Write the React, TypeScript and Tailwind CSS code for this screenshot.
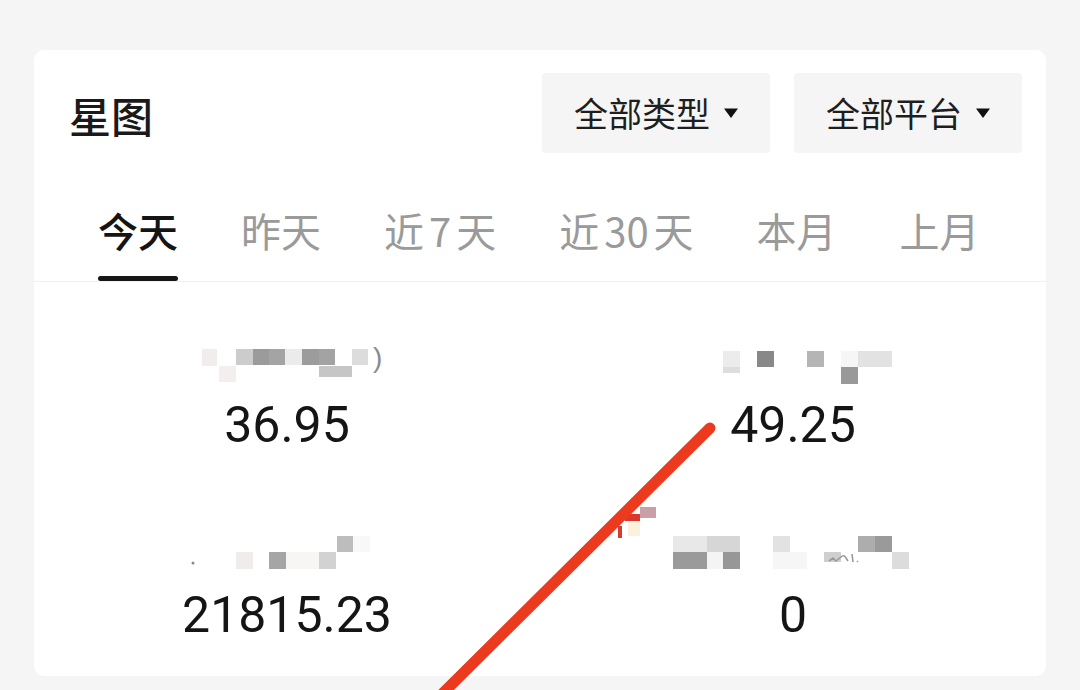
type Cell = { x: number; y: number; w: number; h: number; c: string };

// 数字前后留一点空隙，和汉字分开
const tabs: [string, string, string][] = [
  ["今天", "", ""],
  ["昨天", "", ""],
  ["近", "7", "天"],
  ["近", "30", "天"],
  ["本月", "", ""],
  ["上月", "", ""],
];

// 打码后的指标名称，用色块拼出来
const masks: Cell[][] = [
  [
    { x: 65, y: 10, w: 15, h: 17, c: "#f2eded" },
    { x: 82, y: 27, w: 17, h: 16, c: "#f4eeee" },
    { x: 99, y: 10, w: 17, h: 16, c: "#cccccc" },
    { x: 116, y: 10, w: 16, h: 16, c: "#9b9b9b" },
    { x: 132, y: 10, w: 16, h: 16, c: "#a4a4a4" },
    { x: 148, y: 10, w: 17, h: 16, c: "#ebebeb" },
    { x: 165, y: 10, w: 17, h: 16, c: "#9c9c9c" },
    { x: 182, y: 10, w: 16, h: 16, c: "#a3a3a3" },
    { x: 182, y: 27, w: 33, h: 11, c: "#c6c6c6" },
    { x: 215, y: 10, w: 16, h: 16, c: "#dcdcdc" },
  ],
  [
    { x: 80, y: 12, w: 17, h: 16, c: "#ececec" },
    { x: 80, y: 28, w: 17, h: 6, c: "#dddddd" },
    { x: 114, y: 12, w: 17, h: 16, c: "#888888" },
    { x: 164, y: 12, w: 17, h: 16, c: "#b5b5b5" },
    { x: 198, y: 12, w: 17, h: 16, c: "#f6f6f6" },
    { x: 215, y: 12, w: 34, h: 16, c: "#e2e2e2" },
    { x: 198, y: 28, w: 17, h: 17, c: "#999999" },
  ],
  [
    { x: 200, y: 7, w: 17, h: 16, c: "#bdbdbd" },
    { x: 216, y: 7, w: 17, h: 16, c: "#f8f8f8" },
    { x: 99, y: 23, w: 17, h: 17, c: "#f0ecec" },
    { x: 132, y: 23, w: 17, h: 17, c: "#a5a5a5" },
    { x: 149, y: 23, w: 33, h: 17, c: "#f8f5f5" },
    { x: 182, y: 23, w: 17, h: 17, c: "#d2d2d2" },
  ],
  [
    { x: -18, y: -15, w: 15, h: 7, c: "#d9382a" },
    { x: -3, y: -22, w: 16, h: 11, c: "#c9a0a6" },
    { x: -15, y: -8, w: 12, h: 15, c: "#fbf1dc" },
    { x: -25, y: -3, w: 4, h: 12, c: "#d83a30" },
    { x: 30, y: 7, w: 34, h: 16, c: "#e8e8e8" },
    { x: 64, y: 7, w: 33, h: 16, c: "#d6d6d6" },
    { x: 130, y: 7, w: 17, h: 16, c: "#e2e2e2" },
    { x: 215, y: 7, w: 17, h: 16, c: "#adadad" },
    { x: 232, y: 7, w: 17, h: 16, c: "#9a9a9a" },
    { x: 30, y: 23, w: 34, h: 17, c: "#9a9a9a" },
    { x: 64, y: 23, w: 16, h: 17, c: "#f4f4f4" },
    { x: 80, y: 23, w: 17, h: 17, c: "#979797" },
    { x: 130, y: 23, w: 34, h: 17, c: "#f6f6f6" },
    { x: 181, y: 23, w: 17, h: 10, c: "#cfcfcf" },
    { x: 249, y: 23, w: 17, h: 17, c: "#dcdcdc" },
  ],
];

const stats = ["36.95", "49.25", "21815.23", "0"];

function Mosaic({ cells, idx }: { cells: Cell[]; idx: number }) {
  return (
    <svg width="300" height="48" viewBox="0 0 300 48" className="overflow-visible">
      {cells.map((r, i) => (
        <rect key={i} x={r.x} y={r.y} width={r.w} height={r.h} fill={r.c} />
      ))}
      {idx === 0 && (
        <text x="236" y="28" fontSize="28" fill="#8a8a8a" fontFamily="Liberation Sans, sans-serif">
          )
        </text>
      )}
      {idx === 2 && <circle cx="56" cy="34" r="1.5" fill="#888" />}
      {idx === 3 && (
        <path d="M186 32 l4 -3 l3 3 l5 -4 q3 -3 5 1 l2 3 M209 25 l1 8 M214 32 l1 1" stroke="#999" strokeWidth="1.6" fill="none" />
      )}
    </svg>
  );
}

function Caret() {
  return (
    <svg width="14" height="10" viewBox="0 0 14 10" className="shrink-0">
      <path d="M0 0.5 H14 L7 10 Z" fill="#111" />
    </svg>
  );
}

export default function App() {
  return (
    <div className="relative w-[1080px] h-[690px] overflow-hidden bg-[#f5f5f5] px-[34px] pt-[50px] font-['Noto_Sans_CJK_SC',sans-serif]">
      <div className="h-[626px] rounded-[10px] bg-white">
        {/* 标题 + 筛选 */}
        <div className="flex items-start justify-between pl-[35px] pr-[24px] pt-[23px]">
          <div className="mt-[21px] text-[42px] leading-none font-medium text-[#1a1a1a]">星图</div>
          <div className="flex gap-[24px]">
            {["全部类型", "全部平台"].map((t) => (
              <div
                key={t}
                className="flex h-[80px] w-[228px] items-center justify-center gap-[14px] rounded-[4px] bg-[#f6f5f5] text-[34px] text-[#1e1e1e]"
              >
                <span className="leading-none">{t}</span>
                <Caret />
              </div>
            ))}
          </div>
        </div>

        {/* 时间标签 */}
        <div className="mt-[57px] flex gap-[63px] border-b border-[#f0f0f0] pl-[64px]">
          {tabs.map(([a, n, b], i) => (
            <div key={i} className="flex flex-col items-center">
              <span
                className={
                  i === 0
                    ? "text-[40px] leading-none font-medium text-[#141414]"
                    : "text-[40px] leading-none text-[#9a9a9a]"
                }
              >
                {a}
                {n && <span className="px-[5px]">{n}</span>}
                {b}
              </span>
              <div className={i === 0 ? "mt-[26px] h-[5px] w-full rounded-full bg-[#161616]" : "mt-[26px] h-[5px]"} />
            </div>
          ))}
        </div>

        {/* 数据 */}
        <div className="grid grid-cols-2 gap-y-[74px] pt-[57px]">
          {stats.map((v, i) => (
            <div key={i} className="flex flex-col items-center">
              <Mosaic cells={masks[i]} idx={i} />
              <div className="mt-[8px] font-['Roboto',sans-serif] text-[50px] leading-[60px] text-[#151515]">{v}</div>
            </div>
          ))}
        </div>
      </div>

      {/* 红色划线标注 */}
      <svg className="pointer-events-none absolute inset-0" width="1080" height="690" viewBox="0 0 1080 690">
        <line x1="710" y1="428" x2="434" y2="702" stroke="#ec3a1e" strokeWidth="11" strokeLinecap="round" />
      </svg>
    </div>
  );
}
